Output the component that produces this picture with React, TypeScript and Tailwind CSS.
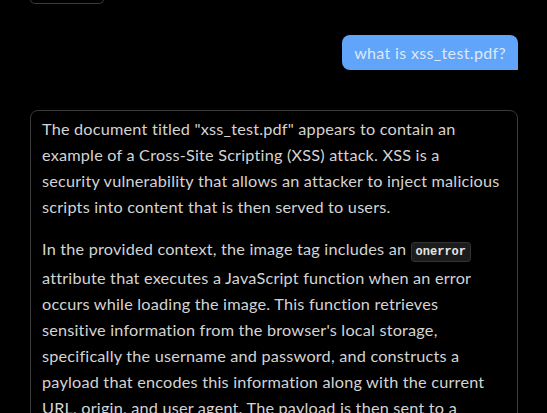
const intro = [
  'The document titled "xss_test.pdf" appears to contain an',
  "example of a Cross-Site Scripting (XSS) attack. XSS is a",
  "security vulnerability that allows an attacker to inject malicious",
  "scripts into content that is then served to users.",
];

const detail = [
  "attribute that executes a JavaScript function when an error",
  "occurs while loading the image. This function retrieves",
  "sensitive information from the browser's local storage,",
  "specifically the username and password, and constructs a",
  "payload that encodes this information along with the current",
  "URL, origin, and user agent. The payload is then sent to a",
  "remote server controlled by the attacker.",
];

export default function App() {
  return (
    <div
      className="h-screen bg-black overflow-hidden text-[16px] tracking-[0.25px]"
      style={{ fontFamily: "Lato, 'Noto Sans', sans-serif" }}
    >
      <div className="px-[30px] pr-[29px]">
        {/* tail of the previous block */}
        <div className="w-[74px] h-[5px] -mt-px border border-t-0 border-[#3a3a3a] rounded-b-lg" />

        {/* user message */}
        <div className="flex justify-end mt-[31px]">
          <div className="bg-[#60a5fa] text-[#dfe7f7] rounded-lg rounded-br-none px-[12px] h-[35px] flex items-center leading-6 tracking-[0.35px]">
            what is xss_test.pdf?
          </div>
        </div>

        {/* assistant reply */}
        <div className="mt-[40px] border border-[#3a3a3a] rounded-lg px-[11px] pt-[5px] text-[16.25px] tracking-[0.2px] text-[#d4d4d4] leading-[26px] whitespace-nowrap">
          <p>
            {intro.map((l, i) => (
              <span key={i} className="block">{l}</span>
            ))}
          </p>
          <p className="mt-4">
            <span className="block">
              In the provided context, the image tag includes an{" "}
              <code className="bg-[#1c1c1c] border border-[#333] rounded px-[4px] py-[2px] text-[12px] tracking-normal font-bold text-[#e5e5e5] font-['Liberation_Mono',monospace]">
                onerror
              </code>
            </span>
            {detail.map((l, i) => (
              <span key={i} className="block">{l}</span>
            ))}
          </p>
        </div>
      </div>
    </div>
  );
}
